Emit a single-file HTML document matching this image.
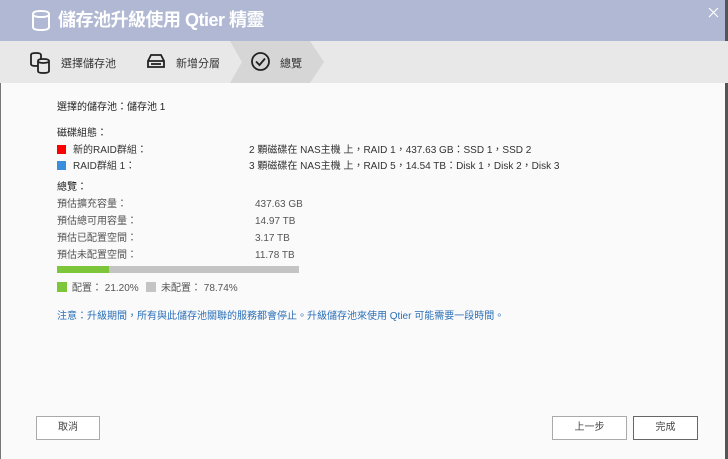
<!DOCTYPE html>
<html><head><meta charset="utf-8"><style>
*{margin:0;padding:0;box-sizing:border-box}
body{width:728px;height:459px;overflow:hidden;background:#fafafa;font-family:"Liberation Sans","Noto Sans CJK TC",sans-serif;position:relative}
.hdr{position:absolute;left:0;top:0;width:728px;height:41px;background:#b0b8d3;color:#fff}
.hdr .t{position:absolute;left:58px;top:9px;font-size:18px;line-height:22px;font-weight:bold;letter-spacing:-0.5px}
.steps{position:absolute;left:0;top:41px;width:728px;height:42px;background:#e8e8e8}
.a{position:absolute;font-size:11px;line-height:12px;color:#333;white-space:nowrap}
.b{position:absolute;font-size:10px;line-height:12px;color:#555;white-space:nowrap}
.c .a,.c .b{margin-top:2px}
.btn{position:absolute;top:416px;height:24px;border:1px solid #aaa;background:#fff;font-size:10px;color:#444;text-align:center;line-height:22px}
</style></head><body>
<div class="hdr">
<svg style="position:absolute;left:31px;top:9px" width="20" height="22" viewBox="0 0 20 22"><path d="M2 5 Q2 2 10 2 Q18 2 18 5 V18 Q18 21 10 21 Q2 21 2 18 Z M2 5 Q2 8 10 8 Q18 8 18 5" fill="none" stroke="#fff" stroke-width="2"/></svg>
<div class="t">儲存池升級使用 Qtier 精靈</div>
<svg style="position:absolute;left:708px;top:7px" width="11" height="11"><path d="M1 1L10 10M10 1L1 10" stroke="#fff" stroke-width="1.2"/></svg>
</div>
<div style="position:absolute;left:725px;top:0;width:3px;height:459px;background:#555"></div>
<div style="position:absolute;left:0;top:83px;width:1px;height:376px;background:#777"></div>
<div class="steps">
<svg style="position:absolute;left:230px;top:0" width="96" height="42"><polygon points="0,0 80,0 94,21 80,42 0,42 12,21" fill="#d6d6d6"/></svg>
<svg style="position:absolute;left:29px;top:10px" width="24" height="24" viewBox="0 0 24 24" fill="none" stroke="#222" stroke-width="1.8"><path d="M2 4Q2 2 7 2Q12 2 12 4V13Q12 15 7 15Q2 15 2 13Z"/><path d="M9 10Q9 8 14 8Q20 8 20 10V20Q20 22 14 22Q9 22 9 20Z" fill="#e8e8e8"/><path d="M9 11Q14 13 20 11"/></svg>
<div class="a" style="left:61px;top:17px">選擇儲存池</div>
<svg style="position:absolute;left:146px;top:12px" width="20" height="16" viewBox="0 0 20 16" fill="none" stroke="#222" stroke-width="1.8"><path d="M2 8L5 2H15L18 8V14H2Z M2 8H18"/><path d="M5 11H15"/></svg>
<div class="a" style="left:176px;top:17px">新增分層</div>
<svg style="position:absolute;left:250px;top:10px" width="21" height="21"><circle cx="10.5" cy="10.5" r="8.5" fill="none" stroke="#222" stroke-width="1.8"/><path d="M6 10.5L9.5 14L15 7.5" fill="none" stroke="#222" stroke-width="1.8"/></svg>
<div class="a" style="left:280px;top:17px">總覽</div>
</div>
<div class="c">
<div class="a" style="left:57px;top:100px;font-size:10px;color:#222">選擇的儲存池：儲存池 1</div>
<div class="a" style="left:57px;top:126px;font-size:10px;color:#222">磁碟組態：</div>
<div style="position:absolute;left:57px;top:145px;width:9px;height:9px;background:#f00"></div>
<div class="b" style="left:73px;top:143px;color:#333">新的RAID群組：</div>
<div class="b" style="left:249px;top:143px;color:#333">2 顆磁碟在 NAS主機 上，RAID 1，437.63 GB：SSD 1，SSD 2</div>
<div style="position:absolute;left:57px;top:161px;width:9px;height:9px;background:#3a8fdc"></div>
<div class="b" style="left:73px;top:159px;color:#333">RAID群組 1：</div>
<div class="b" style="left:249px;top:159px;color:#333">3 顆磁碟在 NAS主機 上，RAID 5，14.54 TB：Disk 1，Disk 2，Disk 3</div>
<div class="a" style="left:57px;top:180px;font-size:10px;color:#222">總覽：</div>
<div class="b" style="left:57px;top:197px">預估擴充容量：</div><div class="b" style="left:255px;top:197px">437.63 GB</div>
<div class="b" style="left:57px;top:214px">預估總可用容量：</div><div class="b" style="left:255px;top:214px">14.97 TB</div>
<div class="b" style="left:57px;top:231px">預估已配置空間：</div><div class="b" style="left:255px;top:231px">3.17 TB</div>
<div class="b" style="left:57px;top:248px">預估未配置空間：</div><div class="b" style="left:255px;top:248px">11.78 TB</div>
<div style="position:absolute;left:57px;top:266px;width:242px;height:7px;background:#c4c4c4"><div style="width:52px;height:7px;background:#7dc63a"></div></div>
<div style="position:absolute;left:57px;top:282px;width:10px;height:10px;background:#7dc63a"></div>
<div class="b" style="left:72px;top:281px">配置： 21.20%</div>
<div style="position:absolute;left:146px;top:282px;width:10px;height:10px;background:#c4c4c4"></div>
<div class="b" style="left:161px;top:281px">未配置： 78.74%</div>
<div class="b" style="left:57px;top:309px;color:#2a6fb8">注意：升級期間，所有與此儲存池關聯的服務都會停止。升級儲存池來使用 Qtier 可能需要一段時間。</div>
</div>
<div class="btn" style="left:36px;width:64px">取消</div>
<div class="btn" style="left:552px;width:75px">上一步</div>
<div class="btn" style="left:633px;width:65px;border-color:#666">完成</div>
</body></html>
